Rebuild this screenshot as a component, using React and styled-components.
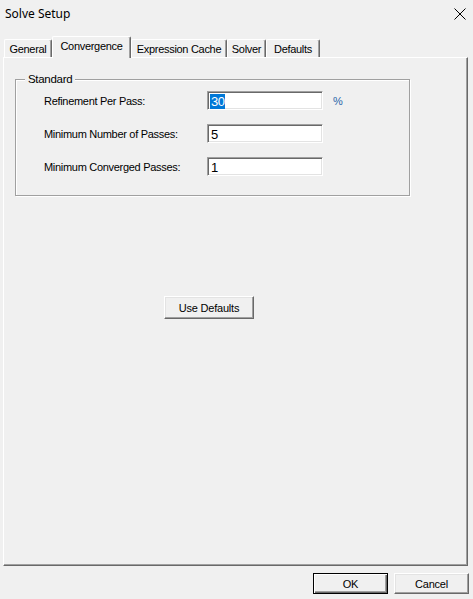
import React from "react";
import styled, { createGlobalStyle } from "styled-components";

const Global = createGlobalStyle`
  html, body { margin: 0; padding: 0; background: #f0f0f0; }
  * { box-sizing: border-box; }
`;

const Win = styled.div`
  width: 473px;
  height: 599px;
  background: #f0f0f0;
  display: flex;
  flex-direction: column;
  font-family: "Liberation Sans", Arial, sans-serif;
  font-size: 11px;
  letter-spacing: -0.3px;
  color: #000;
  overflow: hidden;
`;

const TitleBar = styled.div`
  height: 30px;
  display: flex;
  align-items: center;
  justify-content: space-between;
  padding: 0 7px 3px 5px;
  font-family: "Noto Sans", sans-serif;
  font-size: 12px;
  letter-spacing: 0;
`;

const Close = styled.svg`
  width: 12px;
  height: 12px;
`;

const TabStrip = styled.div`
  display: flex;
  align-items: flex-end;
  height: 21px;
  margin: 6px 0 0 4px;
  position: relative;
  z-index: 2;
`;

const Tab = styled.div`
  width: ${(p) => p.$w}px;
  height: ${(p) => (p.$active ? 22 : 18)}px;
  margin-bottom: ${(p) => (p.$active ? -1 : 0)}px;
  display: flex;
  align-items: ${(p) => (p.$active ? "flex-start" : "center")};
  padding-top: ${(p) => (p.$active ? 3 : 1)}px;
  justify-content: center;
  background: #f0f0f0;
  border-top: 1px solid #fff;
  border-left: 1px solid #fff;
  border-right: 1px solid #696969;
  box-shadow: inset -1px 0 0 #a0a0a0;
  border-radius: 2px 2px 0 0;
  white-space: nowrap;
`;

const Panel = styled.div`
  margin: 0 5px 0 3px;
  height: 509px;
  border-top: 1px solid #fff;
  border-left: 1px solid #fff;
  border-right: 1px solid #696969;
  border-bottom: 1px solid #696969;
  box-shadow: inset -1px -1px 0 #a0a0a0;
  display: flex;
  flex-direction: column;
  align-items: flex-start;
  padding: 21px 0 0 11px;
`;

const Group = styled.div`
  position: relative;
  width: 395px;
  border: 1px solid #a0a0a0;
  box-shadow: inset 1px 1px 0 #fff, 1px 1px 0 #fff;
  padding: 11px 0 19px 28px;
  display: grid;
  grid-template-columns: 163px 116px auto;
  row-gap: 14px;
  align-items: center;
`;

const Legend = styled.span`
  position: absolute;
  top: -7px;
  left: 9px;
  padding: 0 3px;
  background: #f0f0f0;
  font-size: 11.5px;
`;

const Label = styled.label`
  font-size: 11px;
`;

const Field = styled.div`
  height: 19px;
  background: #fff;
  border-top: 1px solid #a0a0a0;
  border-left: 1px solid #a0a0a0;
  border-right: 1px solid #fff;
  border-bottom: 1px solid #fff;
  box-shadow: inset 1px 1px 0 #696969, inset -1px -1px 0 #e3e3e3;
  padding: 2px 0 0 2px;
  font-size: 13px;
  line-height: 15px;
  display: flex;
  align-items: flex-start;
`;

const Sel = styled.span`
  background: ${(p) => (p.$sel ? "#0078d7" : "transparent")};
  color: ${(p) => (p.$sel ? "#fff" : "#000")};
  padding: 0 1px;
  letter-spacing: -0.5px;
`;

const Unit = styled.span`
  color: #2a64a8;
  padding-left: 10px;
  font-size: 11px;
`;

const Btn = styled.button`
  width: ${(p) => p.$w}px;
  height: ${(p) => p.$h}px;
  margin: 0;
  font-family: "Liberation Sans", Arial, sans-serif;
  font-size: 11px;
  letter-spacing: -0.2px;
  color: #000;
  background: #f0f0f0;
  border-top: 1px solid ${(p) => (p.$def ? "#000" : "#fff")};
  border-left: 1px solid ${(p) => (p.$def ? "#000" : "#fff")};
  border-right: 1px solid ${(p) => (p.$def ? "#000" : "#696969")};
  border-bottom: 1px solid ${(p) => (p.$def ? "#000" : "#696969")};
  box-shadow: ${(p) =>
    p.$def
      ? "inset 1px 1px 0 #fff, inset -1px -1px 0 #696969, inset -2px -2px 0 #a0a0a0"
      : "inset -1px -1px 0 #a0a0a0, inset 1px 1px 0 #e3e3e3"};
  padding: 0;
`;

const DefaultsBtn = styled(Btn)`
  margin: 100px 0 0 149px;
`;

const Footer = styled.div`
  display: flex;
  justify-content: flex-end;
  gap: 6px;
  padding: 7px 4px 0 0;
`;

const tabs = [
  { name: "General", w: 48 },
  { name: "Convergence", w: 79, active: true },
  { name: "Expression Cache", w: 96 },
  { name: "Solver", w: 39 },
  { name: "Defaults", w: 54 },
];

const rows = [
  { label: "Refinement Per Pass:", value: "30", sel: true, unit: "%" },
  { label: "Minimum Number of Passes:", value: "5" },
  { label: "Minimum Converged Passes:", value: "1" },
];

export default function App() {
  return (
    <>
      <Global />
      <Win>
        <TitleBar>
          <span>Solve Setup</span>
          <Close viewBox="0 0 12 12">
            <path d="M0.5 0.5 L11.5 11.5 M11.5 0.5 L0.5 11.5" stroke="#000" strokeWidth="1" fill="none" />
          </Close>
        </TitleBar>
        <TabStrip>
          {tabs.map((t) => (
            <Tab key={t.name} $w={t.w} $active={t.active}>
              {t.name}
            </Tab>
          ))}
        </TabStrip>
        <Panel>
          <Group>
            <Legend>Standard</Legend>
            {rows.map((r) => (
              <React.Fragment key={r.label}>
                <Label>{r.label}</Label>
                <Field>
                  <Sel $sel={r.sel}>{r.value}</Sel>
                </Field>
                <Unit>{r.unit || ""}</Unit>
              </React.Fragment>
            ))}
          </Group>
          <DefaultsBtn $w={90} $h={23}>Use Defaults</DefaultsBtn>
        </Panel>
        <Footer>
          <Btn $w={75} $h={21} $def>OK</Btn>
          <Btn $w={75} $h={21}>Cancel</Btn>
        </Footer>
      </Win>
    </>
  );
}
